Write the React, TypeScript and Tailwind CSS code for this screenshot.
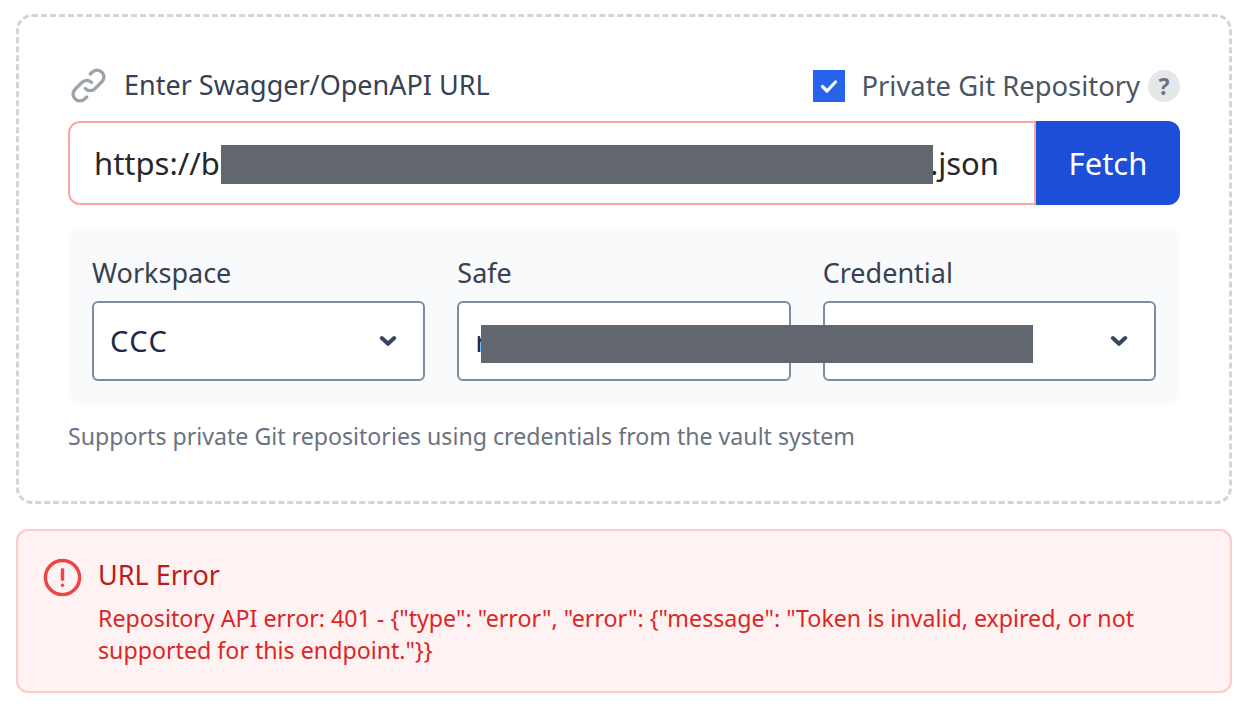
import React from "react";

const Chevron = () => (
  <svg width="18" height="12" viewBox="0 0 18 12" fill="none" className="shrink-0">
    <path d="M2.8 3 L9 8.8 L15.2 3" stroke="#374560" strokeWidth="4" strokeLinecap="round" strokeLinejoin="round" />
  </svg>
);

function Field({ label, value, chevron }: { label: string; value: string; chevron: boolean }) {
  return (
    <div className="flex flex-col min-w-0">
      <div className="text-[27px] leading-[38px] h-[38px] mt-[1px] text-[#374151] mb-[9px]">{label}</div>
      <div className="h-[80px] rounded-[6px] border-2 border-[#7f8ba0] bg-white flex items-center justify-between pl-[16px] pr-[26px] text-[29px] tracking-[1.5px] text-[#1e2a47]">
        <span>{value}</span>
        {chevron && <Chevron />}
      </div>
    </div>
  );
}

export default function App() {
  return (
    <div className="w-[1250px] h-[714px] bg-white pl-4 pr-[18px] pt-[14px] flex flex-col overflow-hidden font-['Noto_Sans',sans-serif]">
      <div className="h-[490px] rounded-[16px] border-[3px] border-dashed border-[#d1d5db] px-[49px] pt-[49px]">
        <div className="flex items-center justify-between h-[40px]">
          <div className="flex items-center gap-[15px]">
            <svg width="41" height="41" viewBox="0 0 24 24" fill="none" stroke="#9ca3af" strokeWidth="2" strokeLinecap="round" strokeLinejoin="round" className="-mt-[2px]">
              <path d="M13.83 10.17a4 4 0 0 0-5.66 0l-4 4a4 4 0 1 0 5.66 5.66l1.1-1.1" />
              <path d="M10.17 13.83a4 4 0 0 0 5.66 0l4-4a4 4 0 0 0-5.66-5.66l-1.1 1.1" />
            </svg>
            <span className="text-[27px] text-[#374151] -mt-[1px]">Enter Swagger/OpenAPI URL</span>
          </div>
          <div className="flex items-center">
            <div className="w-[32px] h-[32px] bg-[#2563eb] flex items-center justify-center mr-[16px]">
              <svg width="20" height="20" viewBox="0 0 20 20" fill="none">
                <path d="M3.5 10.5 L8 15 L16.5 6" stroke="white" strokeWidth="3.2" strokeLinecap="round" strokeLinejoin="round" />
              </svg>
            </div>
            <span className="text-[27.4px] text-[#4b5563] -mt-[1px]">Private Git Repository</span>
            <span className="ml-[8px] w-[32px] h-[32px] rounded-full bg-[#e5e7eb] text-[#6b7280] text-[23px] font-bold flex items-center justify-center">?</span>
          </div>
        </div>
        <div className="flex h-[84px] mt-[15px]">
          <div className="relative flex-1 rounded-l-[12px] border-2 border-[#fca5a5] flex items-center pl-[24px] text-[31px] text-[#27272a] justify-between pr-[35px]">
            <span>https://b</span>
            <span>.json</span>
            <div className="absolute left-[151px] top-[22px] w-[712px] h-[39px] bg-[#62666f]" />
          </div>
          <button className="w-[144px] rounded-r-[12px] bg-[#1d4ed8] text-white text-[31px]">Fetch</button>
        </div>
        <div className="relative mt-[24px] h-[176px] rounded-[12px] bg-[#f9fafb] px-[24px] pt-[24px] grid grid-cols-3 gap-x-[32px]">
          <Field label="Workspace" value="CCC" chevron />
          <Field label="Safe" value="r" chevron={false} />
          <Field label="Credential" value="" chevron />
          <div className="absolute left-[413px] top-[96px] w-[552px] h-[38px] bg-[#62666f]" />
        </div>
        <div className="mt-[15px] text-[23.15px] leading-[32px] text-[#6b7280]">
          Supports private Git repositories using credentials from the vault system
        </div>
      </div>
      <div className="mt-[25px] h-[164px] rounded-[12px] border-2 border-[#fecaca] bg-[#fef2f2] flex pl-[24px] pr-[26px] pt-[26px]">
        <svg width="41" height="41" viewBox="0 0 24 24" fill="none" stroke="#ef4444" strokeWidth="2" strokeLinecap="round" strokeLinejoin="round" className="shrink-0">
          <circle cx="12" cy="12" r="10" />
          <path d="M12 7.5v5.5" />
          <path d="M12 16.5v.01" />
        </svg>
        <div className="ml-[15px] min-w-0">
          <div className="text-[27px] leading-[36px] text-[#b91c1c]">URL Error</div>
          <div className="mt-[9px] text-[23.2px] leading-[32px] text-[#dc2626]">
            Repository API error: 401 - {'{"type": "error", "error": {"message": "Token is invalid, expired, or not'}
            <br />
            {'supported for this endpoint."}}'}
          </div>
        </div>
      </div>
    </div>
  );
}
